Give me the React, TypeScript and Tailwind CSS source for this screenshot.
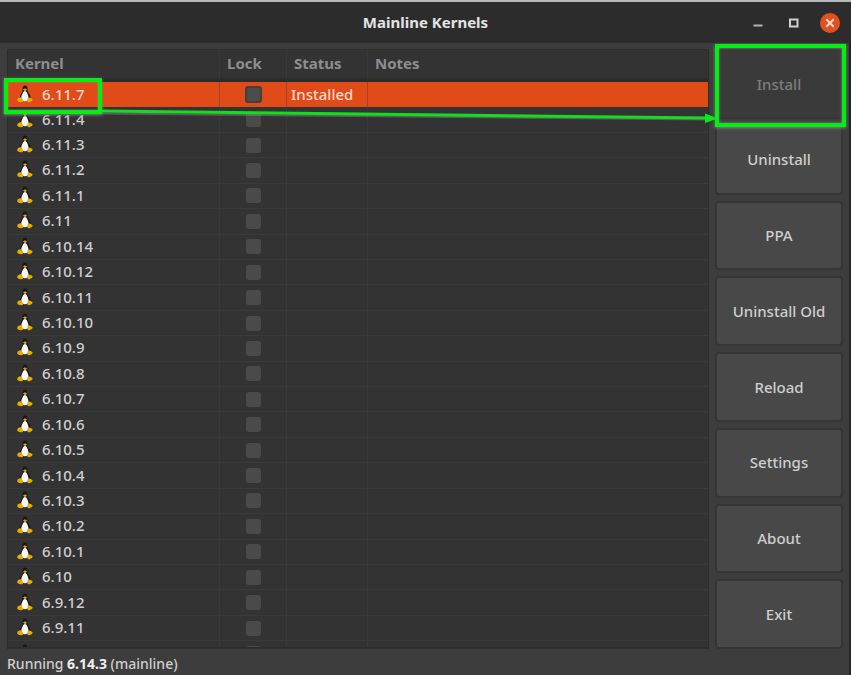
import React from "react";

const versions = [
  "6.11.7", "6.11.4", "6.11.3", "6.11.2", "6.11.1", "6.11", "6.10.14", "6.10.12",
  "6.10.11", "6.10.10", "6.10.9", "6.10.8", "6.10.7", "6.10.6", "6.10.5", "6.10.4",
  "6.10.3", "6.10.2", "6.10.1", "6.10", "6.9.12", "6.9.11",
];

const actions = ["Install", "Uninstall", "PPA", "Uninstall Old", "Reload", "Settings", "About", "Exit"];

function Tux() {
  return (
    <svg viewBox="0 0 16 18" className="h-[18px] w-4 shrink-0" aria-hidden="true">
      <path d="M8 .5C6.300.5 5.500 2 5.600 4c.1 2-.4 3-1.400 4.700C3.100 10.500 2.300 12.500 2.500 15h11.200c.3-2.500-.5-4.700-1.600-6.300C11 7 10.400 6 10.400 4 10.500 2 9.700.5 8 .5z" fill="#181818" />
      <path d="M8 6c-1.300 0-1.900 1-2.500 2.500-.8 1.700-1.400 3-1.100 5C4.700 15.200 6 16.200 8 16.200s3.300-1 3.500-2.700c.2-2-.4-3.300-1.100-5C9.800 7 9.300 6 8 6z" fill="#fafafa" />
      <path d="M6 4.600 8 3.300l2 1.300-1.800 2z" fill="#d8a416" />
      <path d="M.5 14c.3-1 1.400-.9 2-1.400.9-.6 1.700-.3 2.300.6l1.200 1.900c.7 1.300-.2 2.300-1.700 2.200-1.400-.1-2.200-.6-3.200-.9-1-.3-.9-1.400-.6-2.400zM10.400 15.200c.2-1.100 0-2.200 1-2.600.9-.3 1.900 0 2.500.5.6.6 1.600.8 1.700 1.600.1.900-1 1.200-1.800 1.800-.9.700-1.600 1-2.400.8-.9-.2-1.200-1.100-1-2.100z" fill="#e6ac00" />
    </svg>
  );
}

function KernelRow({ version, selected = false }: { version: string; selected?: boolean }) {
  const cell = selected
    ? "border-r border-[#a04528] p-0"
    : "border-r border-b border-[#3a3a3a] p-0";
  return (
    <tr className={selected ? "bg-[#e04b17] text-[#f8dcd2]" : "text-[#cfcfcf]"}>
      <td className={cell}>
        <div className="flex h-4 items-center gap-[9px] pb-[2px] pl-[9px] leading-4">
          <Tux />
          {version}
        </div>
      </td>
      <td className={cell}>
        <input
          type="checkbox"
          aria-label={`Lock ${version}`}
          className={
            selected
              ? "mx-auto block size-[17px] appearance-none rounded-[3px] border-2 border-[#40403f] bg-[#4c4c4c]"
              : "mx-auto block size-[15px] appearance-none rounded-[3px] bg-[#4a4a4a]"
          }
        />
      </td>
      <td className={cell}>
        <div className="h-4 pb-[2px] pl-1 leading-[14px]">{selected ? "Installed" : ""}</div>
      </td>
      <td className={selected ? "p-0" : "border-b border-[#3a3a3a] p-0"} />
    </tr>
  );
}

export default function App() {
  return (
    <div className="relative flex h-screen flex-col overflow-hidden border-t-2 border-[#b9b9b9] bg-[#3d3d3d] font-['Noto_Sans',sans-serif] text-[15px] font-medium text-[#cfcfcf]">
      <header className="relative flex h-[41px] shrink-0 items-center justify-end bg-[#2c2c2c] pr-[11px]">
        <h1 className="absolute inset-x-0 text-center font-bold text-[#e4e4e4]">Mainline Kernels</h1>
        <div className="relative flex items-center gap-4">
          <button aria-label="Minimize" className="flex size-5 items-center justify-center">
            <svg viewBox="0 0 20 20" className="size-5"><path d="M5.500 12.500h9" stroke="#b4b4b4" strokeWidth="2" /></svg>
          </button>
          <button aria-label="Maximize" className="flex size-5 items-center justify-center">
            <svg viewBox="0 0 20 20" className="size-5"><path d="M6 6.500h7.500v7H6z" stroke="#d0d0d0" strokeWidth="2" fill="none" /></svg>
          </button>
          <button aria-label="Close" className="flex size-5 items-center justify-center rounded-full bg-[#e44f1e]">
            <svg viewBox="0 0 20 20" className="size-5"><path d="m6.300 6.300 7.400 7.400m0-7.400-7.400 7.400" stroke="#f5ded6" strokeWidth="2" /></svg>
          </button>
        </div>
      </header>

      <main className="flex min-h-0 flex-1 gap-[6px] border-r-2 border-[#252525] pt-[6px] pr-[6px] pl-[7px]">
        <section className="relative flex min-w-0 flex-1 flex-col">
          <div className="min-h-0 flex-1 overflow-hidden border border-b-2 border-[#2d2d2d] bg-[#333333]">
            <table className="h-[617px] w-full table-fixed border-separate border-spacing-0">
              <colgroup>
                <col className="w-[212px]" />
                <col className="w-[67px]" />
                <col className="w-[81px]" />
                <col />
              </colgroup>
              <thead>
                <tr className="h-8 text-left leading-5 text-[#8e8e8e]">
                  <th className="border-r border-b-4 border-r-[#393939] border-b-[#2b2b2b] p-0 pb-[2px] pl-[7px] font-bold">Kernel</th>
                  <th className="border-r border-b-4 border-r-[#393939] border-b-[#2b2b2b] p-0 pb-[2px] pl-[7px] font-bold">Lock</th>
                  <th className="border-r border-b-4 border-r-[#393939] border-b-[#2b2b2b] p-0 pb-[2px] pl-[7px] font-bold">Status</th>
                  <th className="border-b-4 border-b-[#2b2b2b] p-0 pb-[2px] pl-[7px] font-bold">Notes</th>
                </tr>
              </thead>
              <tbody>
                {versions.map((version, i) => (
                  <KernelRow key={version} version={version} selected={i === 0} />
                ))}
                <KernelRow version="" />
              </tbody>
            </table>
          </div>
          <span className="pointer-events-none absolute top-[29px] -left-[3px] h-9 w-[98px] border-4 border-[#00f010] shadow-[0_1px_3px_#888,inset_0_0_2px_#999]" />
        </section>

        <nav className="flex w-32 shrink-0 flex-col gap-[6px]">
          {actions.map((action) => (
            <button
              key={action}
              disabled={action === "Install"}
              className={
                action === "Install"
                  ? "relative min-h-0 flex-1 rounded-[4px] border-2 border-[#363636] bg-[#3a3a3a] text-[#7d7d7d]"
                  : "min-h-0 flex-1 rounded-[4px] border-2 border-[#353535] bg-[#484848]"
              }
            >
              {action}
              {action === "Install" && (
                <span className="pointer-events-none absolute -top-[7px] -right-[5px] -bottom-[10px] -left-[2px] z-10 border-4 border-[#00f010] shadow-[0_1px_3px_#888,inset_0_0_3px_#888]" />
              )}
            </button>
          ))}
        </nav>
      </main>

      <footer className="flex h-[26px] shrink-0 items-center border-r-2 border-[#252525] pt-1 pl-[7px] text-sm">
        <p>Running <strong className="font-bold text-[#eeeeee]">6.14.3</strong> (mainline)</p>
      </footer>

      <svg viewBox="0 0 851 673" className="pointer-events-none absolute inset-0 h-full w-full" aria-hidden="true">
        <path d="M101 111.500 708 117.500" stroke="#888" strokeWidth="2" opacity=".5" />
        <path d="M101 109 708 116" stroke="#15dc1c" strokeWidth="3" />
        <path d="M705 111.500 718 116.500 705 121z" fill="#00f010" />
      </svg>
    </div>
  );
}
